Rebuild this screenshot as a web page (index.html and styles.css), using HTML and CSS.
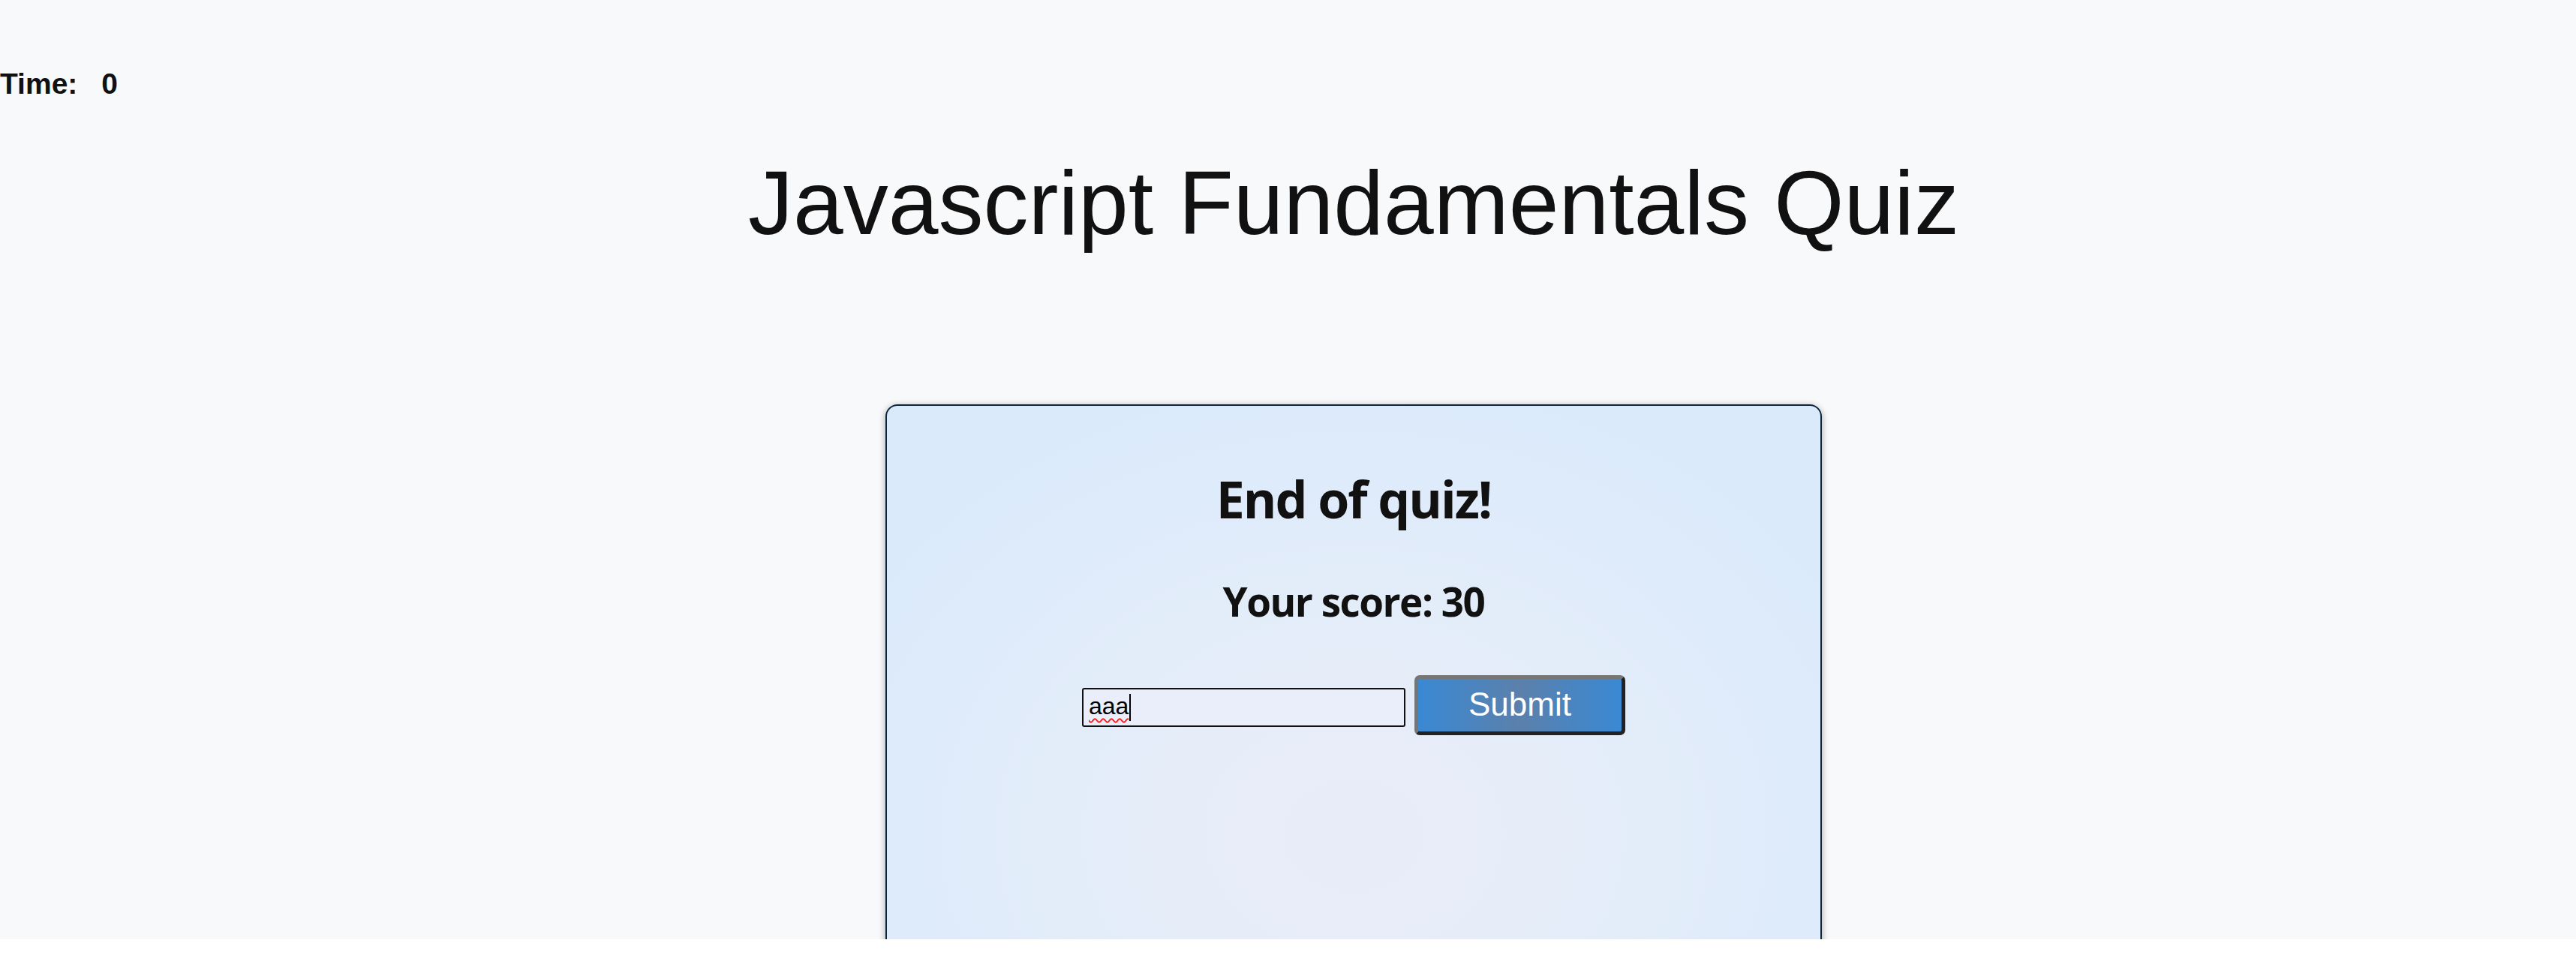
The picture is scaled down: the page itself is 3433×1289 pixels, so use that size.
FILE: index.html
```html
<!DOCTYPE html>
<html lang="en">
<head>
<meta charset="utf-8">
<title>Javascript Fundamentals Quiz</title>
<link rel="stylesheet" href="styles.css">
</head>
<body>
<div class="page">
  <header class="timer">
    <span class="timer-label">Time:</span>
    <span class="timer-value">0</span>
  </header>
  <main class="main">
    <h1 class="title">Javascript Fundamentals Quiz</h1>
    <section class="card">
      <h2 class="card-heading">End of quiz!</h2>
      <p class="score">Your score: 30</p>
      <form class="initials-form">
        <div class="text-input"><span class="typed">aaa</span><span class="caret"></span></div>
        <button type="button" class="submit-btn">Submit</button>
      </form>
    </section>
  </main>
</div>
</body>
</html>
```

FILE: styles.css
```css
html {
  background: #ffffff;
}
body {
  margin: 0;
}
.page {
  height: 1252px;
  overflow: hidden;
  background: #f8f9fa;
  color: #111111;
}
.timer {
  padding-top: 92px;
  display: flex;
  font-family: "Liberation Sans", Arial, sans-serif;
  font-weight: bold;
  font-size: 39px;
  line-height: 1;
}
.timer-value {
  margin-left: 32px;
}
.main {
  padding-left: 175px;
  display: flex;
  flex-direction: column;
  align-items: center;
}
.title {
  margin: 79px 0 0;
  font-family: "Liberation Sans", Arial, sans-serif;
  font-weight: normal;
  font-size: 120px;
  line-height: 1;
  color: #111111;
}
.card {
  margin-top: 209px;
  width: 1244px;
  height: 1100px;
  flex-shrink: 0;
  box-sizing: content-box;
  border: 2px solid #0a263f;
  border-radius: 16px;
  background: radial-gradient(ellipse 60% 55% at 50% 52%, #e9ecf8 0%, #e5edf9 40%, #dbeafb 100%);
  box-shadow: 0 2px 10px rgba(0, 0, 0, 0.35);
  display: flex;
  flex-direction: column;
  align-items: center;
  font-family: "Open Sans", "Noto Sans", sans-serif;
}
.card-heading {
  margin: 90px 0 0;
  font-size: 68px;
  line-height: 1;
  font-weight: bold;
  letter-spacing: -2px;
}
.score {
  margin: 76px 0 0;
  font-size: 53px;
  line-height: 1;
  font-weight: bold;
  letter-spacing: -1.5px;
}
.initials-form {
  margin-top: 72px;
  display: flex;
  align-items: flex-start;
  gap: 12px;
}
.text-input {
  margin-top: 17px;
  width: 431px;
  height: 52px;
  box-sizing: border-box;
  border: 2px solid #111111;
  border-radius: 3px;
  background: #e9eefa;
  padding: 4px 7px 0;
  display: flex;
  align-items: flex-start;
  font-family: "Liberation Sans", Arial, sans-serif;
  font-size: 32px;
  line-height: 36px;
  color: #000000;
}
.typed {
  text-decoration: underline wavy #ff1a1a;
  text-decoration-thickness: 1.5px;
  text-underline-offset: 5px;
}
.caret {
  width: 2px;
  height: 36px;
  margin-top: 2px;
  margin-left: 1px;
  background: #000000;
}
.submit-btn {
  width: 281px;
  height: 80px;
  box-sizing: border-box;
  border-style: solid;
  border-width: 5px;
  border-color: #767676 #222222 #222222 #767676;
  border-radius: 7px;
  background: linear-gradient(to right, #3a89d4 0%, #5b80ab 50%, #3a89d4 100%);
  color: #ffffff;
  font-family: "Liberation Sans", Arial, sans-serif;
  font-size: 44px;
  line-height: 1;
  padding: 0 0 2px;
}
```
